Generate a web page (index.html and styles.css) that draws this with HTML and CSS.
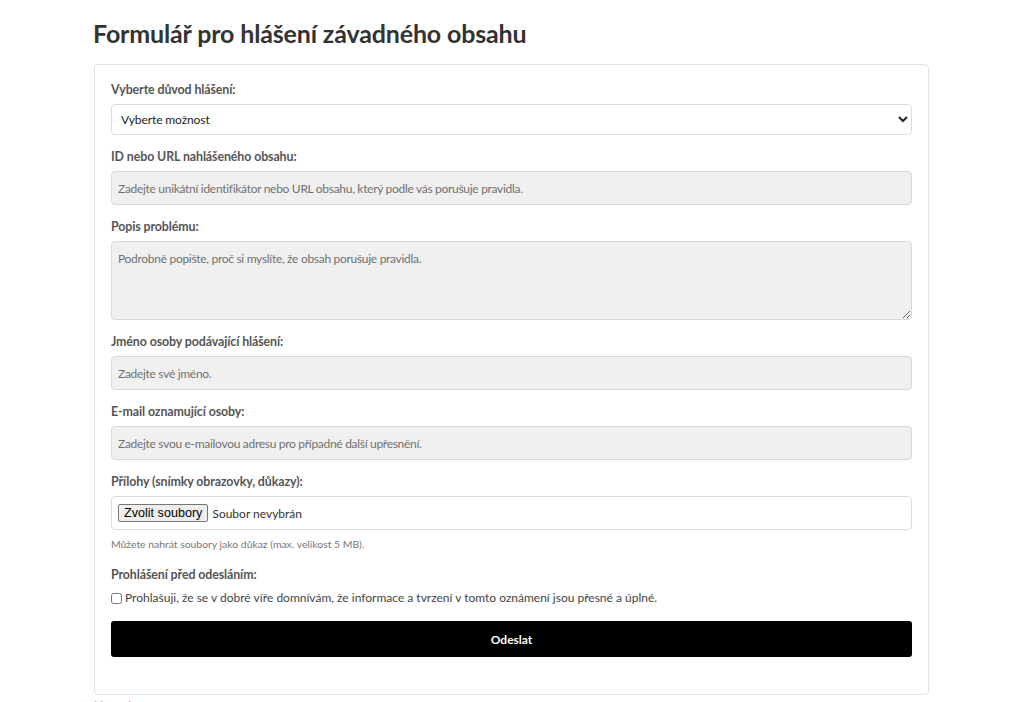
FILE: index.html
```html
<!DOCTYPE html>
<html lang="cs">
<head>
<meta charset="utf-8">
<title>Formulář pro hlášení závadného obsahu</title>
<link rel="stylesheet" href="styles.css">
</head>
<body>
<main class="page">
  <h1 class="title">Formulář pro hlášení závadného obsahu</h1>
  <form class="card">
    <div class="group">
      <label class="label">Vyberte důvod hlášení:</label>
      <select class="select"><option>Vyberte možnost</option></select>
    </div>
    <div class="group">
      <label class="label">ID nebo URL nahlášeného obsahu:</label>
      <input class="field" type="text" placeholder="Zadejte unikátní identifikátor nebo URL obsahu, který podle vás porušuje pravidla.">
    </div>
    <div class="group">
      <label class="label">Popis problému:</label>
      <textarea class="field area" placeholder="Podrobně popište, proč si myslíte, že obsah porušuje pravidla."></textarea>
    </div>
    <div class="group">
      <label class="label">Jméno osoby podávající hlášení:</label>
      <input class="field" type="text" placeholder="Zadejte své jméno.">
    </div>
    <div class="group">
      <label class="label">E-mail oznamující osoby:</label>
      <input class="field" type="text" placeholder="Zadejte svou e-mailovou adresu pro případné další upřesnění.">
    </div>
    <div class="group">
      <label class="label">Přílohy (snímky obrazovky, důkazy):</label>
      <div class="file">
        <span class="file-btn">Zvolit soubory</span>
        <span class="file-name">Soubor nevybrán</span>
      </div>
      <p class="help">Můžete nahrát soubory jako důkaz (max. velikost 5 MB).</p>
    </div>
    <div class="group">
      <label class="label">Prohlášení před odesláním:</label>
      <label class="check"><input type="checkbox" class="box"> Prohlašuji, že se v dobré víře domnívám, že informace a tvrzení v tomto oznámení jsou přesné a úplné.</label>
    </div>
    <button class="submit" type="button">Odeslat</button>
  </form>
  <a class="back" href="#">Upravit</a>
</main>
</body>
</html>
```

FILE: styles.css
```css
* { box-sizing: border-box; }
html, body { margin: 0; padding: 0; background: #fff; }
body {
  font-family: "Lato", "Noto Sans", sans-serif;
  color: #333;
  overflow: hidden;
}
.page {
  width: 835px;
  margin: 0 0 0 94px;
  padding-top: 18px;
}
.title {
  font-size: 25px;
  font-weight: 700;
  line-height: 30px;
  margin: 0 0 16px -1px;
  color: #333;
  letter-spacing: -0.15px;
}
.card {
  border: 1px solid #e2e2e2;
  border-radius: 4px;
  padding: 16px 16px 37px 16px;
  display: flex;
  flex-direction: column;
}
.group {
  display: flex;
  flex-direction: column;
  margin-bottom: 13px;
}
.label {
  font-size: 12.4px;
  font-weight: 700;
  color: #555;
  line-height: 17px;
  margin-bottom: 6px;
  letter-spacing: -0.1px;
}
.select {
  height: 31px;
  border: 1px solid #dcdcdc;
  border-radius: 4px;
  background: #fff;
  font-family: "Lato", sans-serif;
  font-size: 12px;
  letter-spacing: -0.1px;
  color: #222;
  padding: 0 5px;
}
.field {
  height: 34px;
  border: 1px solid #d8d8d8;
  border-radius: 4px;
  background: #f0f0f0;
  font-family: "Lato", sans-serif;
  font-size: 12px;
  letter-spacing: -0.3px;
  color: #333;
  padding: 0 6px;
}
.field::placeholder { color: #707070; }
.area {
  height: 79px;
  padding: 9px 6px;
  resize: vertical;
}
.file {
  height: 34px;
  border: 1px solid #dcdcdc;
  border-radius: 4px;
  background: #fff;
  display: flex;
  align-items: center;
  padding: 0 6px;
  gap: 4px;
}
.file-btn {
  font-family: "Liberation Sans", Arial, sans-serif;
  font-size: 12.6px;
  color: #000;
  background: #efefef;
  border: 1px solid #767676;
  border-radius: 2px;
  padding: 1px 5px;
  line-height: 14px;
}
.file-name {
  font-size: 12px;
  color: #333;
}
.help {
  font-size: 10.4px;
  color: #777;
  margin: 8px 0 2px 0;
  line-height: 13px;
}
.check {
  font-size: 12px;
  color: #444;
  display: flex;
  align-items: center;
  gap: 3px;
  line-height: 18px;
}
.box {
  margin: 0;
  width: 11px;
  height: 11px;
}
.submit {
  height: 36px;
  background: #000;
  color: #fff;
  border: 0;
  border-radius: 3px;
  font-family: "Lato", sans-serif;
  font-weight: 700;
  font-size: 12px;
  margin-top: 1px;
}
.back {
  display: block;
  font-size: 13px;
  color: #f0a050;
  text-decoration: none;
  margin-top: 3px;
}
```
